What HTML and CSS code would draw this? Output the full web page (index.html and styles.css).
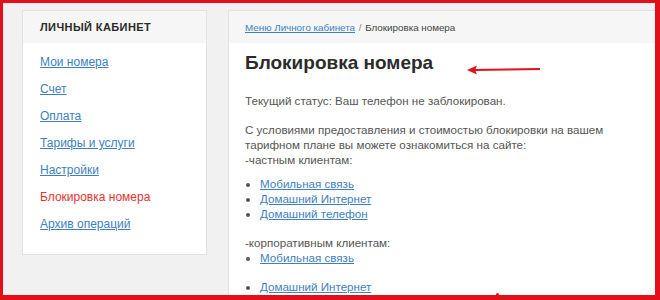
FILE: index.html
```html
<!DOCTYPE html>
<html lang="ru">
<head>
    <meta charset="UTF-8">
    <title>Блокировка номера</title>
    <link rel="stylesheet" href="styles.css">
</head>
<body>

<div class="page">
    <!-- Sidebar menu -->
    <div class="side-card">
        <div class="side-title">Личный кабинет</div>
        <ul class="side-menu">
            <li><a href="#">Мои номера</a></li>
            <li><a href="#">Счет</a></li>
            <li><a href="#">Оплата</a></li>
            <li><a href="#">Тарифы и услуги</a></li>
            <li><a href="#">Настройки</a></li>
            <li class="active">Блокировка номера</li>
            <li><a href="#">Архив операций</a></li>
        </ul>
    </div>

    <!-- Main content -->
    <div class="main-card">
        <div class="crumbs">
            <a href="#">Меню Личного кабинета</a>
            <span class="sep">/</span>
            <span>Блокировка номера</span>
        </div>
        <div class="content">
            <h1>Блокировка номера</h1>
            <p>Текущий статус: Ваш телефон не заблокирован.</p>
            <p class="tight">
                С условиями предоставления и стоимостью блокировки на вашем
                тарифном плане вы можете ознакомиться на сайте:<br>
                -частным клиентам:
            </p>
            <ul class="links">
                <li><a href="#">Мобильная связь</a></li>
                <li><a href="#">Домашний Интернет</a></li>
                <li><a href="#">Домашний телефон</a></li>
            </ul>
            <p class="flush">-корпоративным клиентам:</p>
            <ul class="links">
                <li class="gap"><a href="#">Мобильная связь</a></li>
                <li><a href="#">Домашний Интернет</a></li>
                <li><a href="#">Домашний телефон</a></li>
            </ul>
        </div>
    </div>
</div>

<!-- annotation overlay: red frame and arrows -->
<div class="frame"></div>
<svg class="arrow" width="80" height="12" viewBox="0 0 80 12">
    <path d="M8 6 L74 5" stroke="#e3101a" stroke-width="2" fill="none"/>
    <path d="M1 6 L11 1.5 L9 6 L11 10.5 Z" fill="#e3101a"/>
</svg>
<div class="arrow-tip"></div>

</body>
</html>
```

FILE: styles.css
```css
* {
    box-sizing: border-box;
}

body {
    margin: 0;
    font-family: "Liberation Sans", Arial, sans-serif;
    background-color: #f1f1f1;
    color: #555;
    overflow: hidden;
    height: 300px;
}

a {
    color: #3d7fc0;
}

.page {
    display: flex;
    align-items: flex-start;
    gap: 21px;
    padding: 10px 0 0 22px;
}

/* Sidebar */
.side-card {
    width: 185px;
    flex: none;
    background-color: #fff;
    border: 1px solid #e2e2e2;
}

.side-title {
    height: 32px;
    line-height: 33px;
    padding-left: 17px;
    background-color: #f6f6f6;
    font-size: 11px;
    font-weight: bold;
    letter-spacing: 0.4px;
    text-transform: uppercase;
    color: #2a2a2a;
}

.side-menu {
    list-style: none;
    margin: 0;
    padding: 6px 17px 16px;
    font-size: 12px;
    line-height: 27px;
}

.side-menu .active {
    color: #e5332f;
}

/* Main card */
.main-card {
    width: 428px;
    height: 320px;
    flex: none;
    background-color: #fff;
    border: 1px solid #e2e2e2;
}

.crumbs {
    height: 32px;
    line-height: 34px;
    padding-left: 16px;
    background-color: #f6f6f6;
    font-size: 9.8px;
    color: #444;
}

.crumbs .sep {
    margin: 0 1px;
    color: #888;
}

.content {
    padding: 8px 16px 0;
    font-size: 11.6px;
    line-height: 15px;
}

.content h1 {
    margin: 0 0 18px;
    font-size: 19px;
    line-height: 24px;
    color: #2b2b2b;
}

.content p {
    margin: 0 0 14px;
}

.content p.tight {
    margin-bottom: 9px;
}

.content p.flush {
    margin-bottom: 0;
}

.links {
    margin: 0 0 14px;
    padding-left: 15px;
}

.links li.gap {
    margin-bottom: 14px;
}

/* Red annotation */
.frame {
    position: fixed;
    top: 0;
    left: 0;
    right: 0;
    bottom: 0;
    border-style: solid;
    border-color: #e3101a;
    border-width: 3px 5px 5px 3px;
    pointer-events: none;
}

.arrow {
    position: absolute;
    left: 466px;
    top: 64px;
}

.arrow-tip {
    position: absolute;
    left: 496px;
    top: 293px;
    width: 3px;
    height: 3px;
    border-radius: 50%;
    background-color: #e3101a;
}
```
